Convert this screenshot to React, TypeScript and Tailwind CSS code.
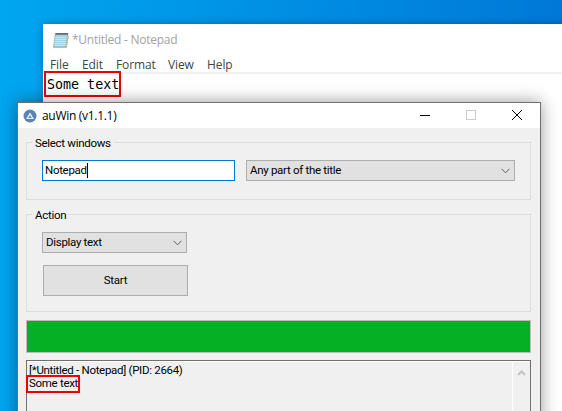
import React from "react";

const ui = { fontFamily: '"Open Sans", "Noto Sans", sans-serif' };
const form = { fontFamily: 'Roboto, "Liberation Sans", sans-serif' };

function Chevron() {
  return (
    <svg width="9" height="6" viewBox="0 0 9 6" className="shrink-0" aria-hidden="true">
      <path d="M0.5 0.8 L4.5 4.8 L8.5 0.8" fill="none" stroke="#5a5a5a" strokeWidth="1" />
    </svg>
  );
}

function Select({ label, className }: { label: string; className: string }) {
  return (
    <div className={`flex items-center justify-between border border-[#adadad] bg-[#e1e1e1] pl-[3px] pr-[4px] ${className}`} style={form}>
      <span className="text-[11.5px] leading-none tracking-[-0.3px] text-black">{label}</span>
      <Chevron />
    </div>
  );
}

function Group({ title, className, children }: { title: string; className: string; children: React.ReactNode }) {
  return (
    <div className={`relative border border-[#dcdcdc] pl-[15px] pt-[17px] ${className}`}>
      <span className="absolute left-[5px] top-[-7px] bg-[#f0f0f0] px-[3px] text-[11.5px] leading-[15px] tracking-[-0.3px] text-black" style={form}>{title}</span>
      {children}
    </div>
  );
}

function NotepadIcon() {
  return (
    <svg width="17" height="17" viewBox="0 0 17 17" aria-hidden="true">
      <path d="M3.5 1.5 H16 L14 15 H1.5 Z" fill="#a5d3e2" stroke="#8aa6b0" strokeWidth="0.8" />
      <path d="M3.5 1 H16 V2.8 H3.5 Z" fill="#5f6f78" />
      <path d="M3 5.5 H14.5 M2.7 7.5 H14.2 M2.4 9.5 H13.9 M2.1 11.5 H13.6 M1.9 13.5 H13.4" stroke="#d0e8f0" strokeWidth="0.8" />
      <path d="M1.5 15.5 H14.5 L16.4 4" fill="none" stroke="#c9b98e" strokeWidth="1" />
    </svg>
  );
}

function AuWinIcon() {
  return (
    <svg width="14" height="14" viewBox="0 0 14 14" aria-hidden="true">
      <circle cx="7" cy="7" r="6.5" fill="#5c83b4" />
      <path d="M7 3.4 L11 10 H3 Z" fill="#e8eef6" />
      <path d="M7 6.2 L8.7 9 H5.3 Z" fill="#5c83b4" />
    </svg>
  );
}

export default function App() {
  return (
    <div
      className="relative h-[411px] w-[562px] overflow-hidden bg-gradient-to-r from-[#00a6f0] to-[#0078d7]"
      style={ui}
    >
      {/* Notepad window */}
      <div className="absolute left-[43px] top-[24px] h-[400px] w-[530px] bg-white shadow-[0_0_8px_rgba(0,0,0,0.3)]">
        <div className="flex h-[31px] items-center pl-[9px] pt-[1px]">
          <NotepadIcon />
          <span className="ml-[3px] text-[12px] tracking-[-0.25px] text-[#a3a3a3]">*Untitled - Notepad</span>
        </div>
        <div className="flex h-[17px] items-center pl-[7px] pt-[2px] text-[12px] tracking-[-0.1px] text-[#444]">
          <span className="w-[32px]">File</span>
          <span className="w-[34px]">Edit</span>
          <span className="w-[52px]">Format</span>
          <span className="w-[39px]">View</span>
          <span>Help</span>
        </div>
        <div className="h-[2px] bg-[#f0f0f0]" />
        <div className="pl-[4px] pt-[2px] text-[13.33px] leading-[18px] text-black" style={{ fontFamily: '"DejaVu Sans Mono", monospace' }}>
          Some text
        </div>
        <div className="absolute left-[1px] top-[47px] h-[26px] w-[77px] border-[2px] border-[#ee0000]" />
      </div>

      {/* auWin window */}
      <div className="absolute left-[17px] top-[102px] h-[340px] w-[524px] border border-[#6f6f6f] bg-[#f0f0f0] shadow-[0_0_16px_rgba(0,0,0,0.4)]">
        <div className="flex h-[25px] items-center bg-white pl-[5px]">
          <AuWinIcon />
          <span className="ml-[5px] text-[12px] tracking-[-0.3px] text-black">auWin (v1.1.1)</span>
          <div className="ml-auto flex items-center">
            <svg width="46" height="25" viewBox="0 0 46 25" aria-hidden="true">
              <path d="M18 12.5 H28" stroke="#000" strokeWidth="1" />
            </svg>
            <svg width="46" height="25" viewBox="0 0 46 25" aria-hidden="true">
              <rect x="18.5" y="7.5" width="9" height="9" fill="none" stroke="#cccccc" strokeWidth="1" />
            </svg>
            <svg width="46" height="25" viewBox="0 0 46 25" aria-hidden="true">
              <path d="M18 7 L28 17 M28 7 L18 17" stroke="#000" strokeWidth="1" />
            </svg>
          </div>
        </div>

        <div className="flex flex-col pl-[8px] pr-[9px] pt-[14px]">
          <Group title="Select windows" className="h-[58px]">
            <div className="flex gap-[11px]">
              <div className="flex h-[21px] w-[193px] items-center border border-[#0078d7] bg-white pl-[2px] text-[11.5px] leading-none tracking-[-0.3px] text-black" style={form}>
                Notepad<span className="h-[15px] w-[1px] bg-black" />
              </div>
              <Select label="Any part of the title" className="h-[21px] w-[269px]" />
            </div>
          </Group>

          <Group title="Action" className="mt-[14px] h-[98px]">
            <Select label="Display text" className="h-[21px] w-[145px]" />
            <div className="ml-[1px] mt-[12px] flex h-[31px] w-[145px] items-center justify-center border border-[#adadad] bg-[#e1e1e1] text-[11.5px] tracking-[-0.3px] text-black" style={form}>
              Start
            </div>
          </Group>

          <div className="mt-[8px] h-[33px] border border-[#bcbcbc] bg-[#06b025]" />

          <div className="relative mt-[7px] flex h-[80px] border border-[#6f6f6f]">
            <div className="flex-1 border-t border-white pl-[2px] text-[11.5px] leading-[13px] tracking-[-0.3px] text-black" style={form}>
              <div className="pt-[2px]">[*Untitled - Notepad] (PID: 2664)</div>
              <div>Some text</div>
            </div>
            <div className="flex w-[18px] justify-center border-l border-t border-white pt-[8px]">
              <svg width="9" height="6" viewBox="0 0 9 6" aria-hidden="true">
                <path d="M1 5 L4.5 1.5 L8 5" fill="none" stroke="#c4c4c4" strokeWidth="2" />
              </svg>
            </div>
            <div className="absolute left-[-1px] top-[14px] h-[18px] w-[54px] border-[2px] border-[#ee0000]" />
          </div>
        </div>
      </div>
    </div>
  );
}
